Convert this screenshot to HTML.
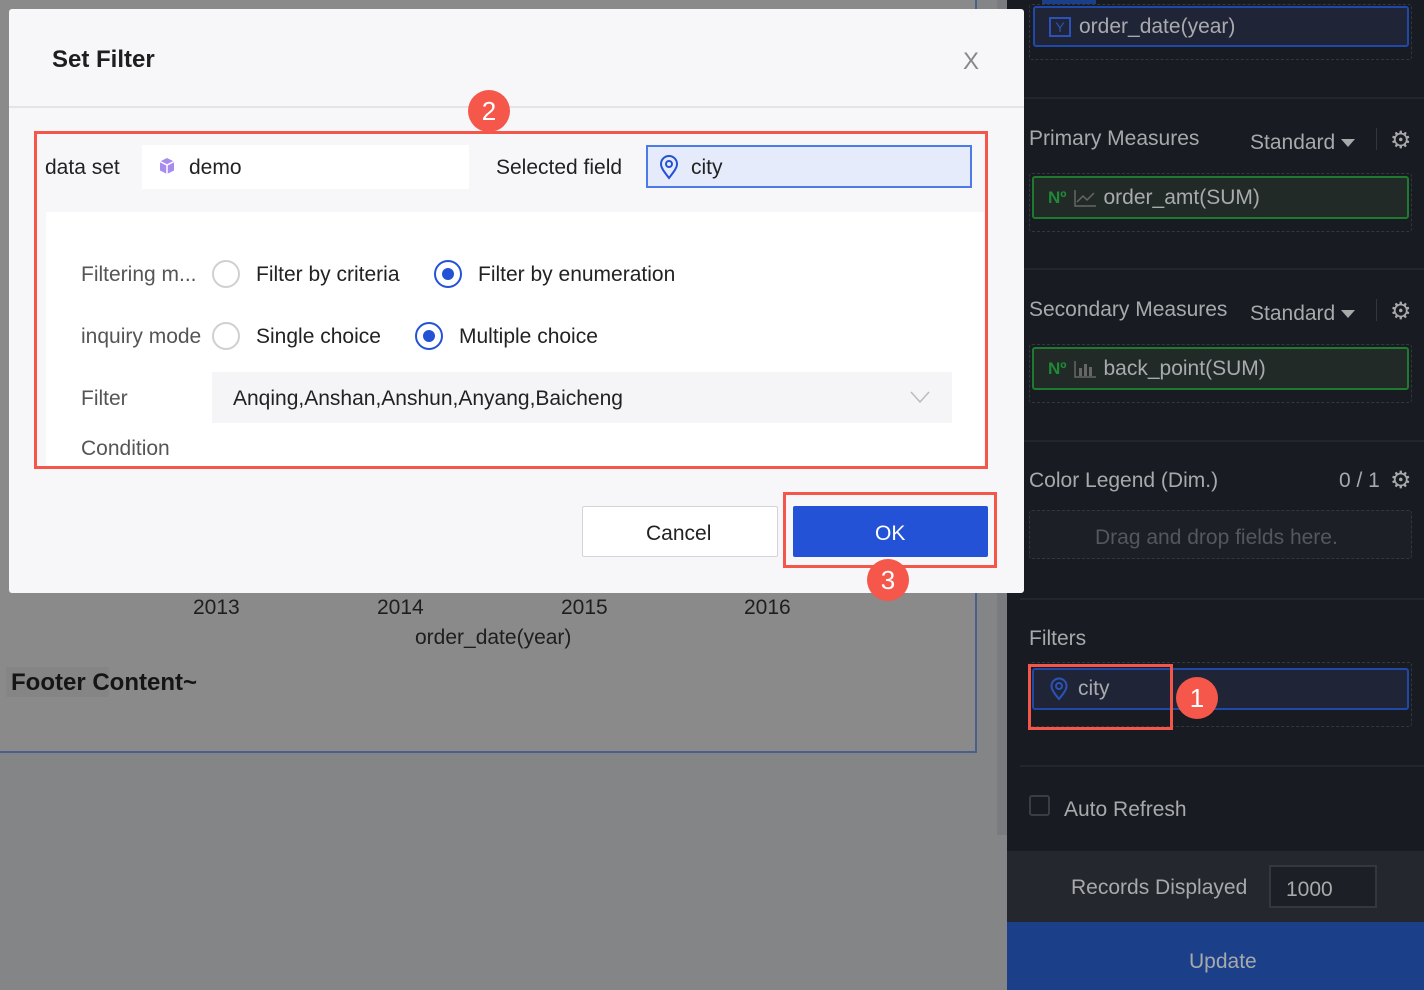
<!DOCTYPE html>
<html><head><meta charset="utf-8"><style>
*{box-sizing:border-box;margin:0;padding:0}
body{width:1424px;height:990px;overflow:hidden;position:relative;background:#848586;font-family:"Liberation Sans",sans-serif}
.abs{position:absolute}
.side{left:1007px;top:0;width:417px;height:990px;background:#181b22}
.t{color:#a8a9ab;font-size:21px;position:absolute}
.hr{position:absolute;left:1020px;width:404px;height:2px;background:#23262d}
.dash{position:absolute;border:1.5px dashed #33363d;border-radius:3px}
.pill{position:absolute;border-radius:3px;font-size:21px;color:#a9aaad;padding-left:14px;display:flex;align-items:center}
.badge{position:absolute;width:42px;height:42px;border-radius:50%;background:#f5574b;color:#fff;font-size:26px;display:flex;align-items:center;justify-content:center}
.red{position:absolute;border:3px solid #f5564a}
.lbl{position:absolute;font-size:21px;color:#555}
.txt{position:absolute;font-size:21px;color:#222}
.radio{position:absolute;width:28px;height:28px;border-radius:50%;border:2px solid #d0d0d3;background:#fff}
.radio.on{border:2px solid #2452d6}
.radio.on::after{content:"";position:absolute;left:6px;top:6px;width:12px;height:12px;border-radius:50%;background:#2452d6}
.tri{display:inline-block;width:0;height:0;border-left:7px solid transparent;border-right:7px solid transparent;border-top:8px solid #a8a9ab;vertical-align:middle;margin-left:6px}
</style></head><body>
<div class="abs" style="left:0;top:0;width:977px;height:753px;background:#8a8a8a;border-right:2px solid #4a5f8f;border-bottom:2px solid #4a5f8f"></div>
<div class="abs" style="left:997px;top:0;width:10px;height:835px;background:#7a7b7e"></div>
<div class="txt" style="left:193px;top:596px;color:#1e1e1e">2013</div>
<div class="txt" style="left:377px;top:596px;color:#1e1e1e">2014</div>
<div class="txt" style="left:561px;top:596px;color:#1e1e1e">2015</div>
<div class="txt" style="left:744px;top:596px;color:#1e1e1e">2016</div>
<div class="txt" style="left:415px;top:626px;color:#1e1e1e">order_date(year)</div>
<div class="abs" style="left:6px;top:667px;width:103px;height:30px;background:#858585"></div>
<div class="txt" style="left:11px;top:669px;font-weight:bold;font-size:24px;color:#151515">Footer Content~</div>

<div class="abs side"></div>
<div class="abs" style="left:1042px;top:0;width:54px;height:4px;background:#1c3f8a"></div>
<div class="dash" style="left:1029px;top:4px;width:383px;height:56px"></div>
<div class="pill" style="left:1033px;top:6px;width:376px;height:41px;background:#1f2537;border:2px solid #1f49a8"><span style="display:inline-block;width:22px;height:20px;border:2px solid #2a52b8;color:#2a52b8;font-size:14px;text-align:center;line-height:16px;margin-right:8px">Y</span>order_date(year)</div>
<div class="hr" style="top:97px"></div>
<div class="t" style="left:1029px;top:127px">Primary Measures</div>
<div class="t" style="left:1250px;top:131px">Standard<span class="tri"></span></div>
<div class="abs" style="left:1376px;top:128px;width:1px;height:22px;background:#33363d"></div>
<div class="t" style="left:1390px;top:126px;font-size:24px">⚙</div>
<div class="dash" style="left:1029px;top:173px;width:383px;height:59px"></div>
<div class="pill" style="left:1032px;top:176px;width:377px;height:43px;background:#222a28;border:2px solid #1e7a2e"><span style="color:#1f8a35;font-size:17px;font-weight:bold;margin-right:6px">Nº</span><svg width="24" height="18" viewBox="0 0 24 18" style="margin-right:7px"><path d="M2 1v16h21M4 13l6-6 4 4 7-7" fill="none" stroke="#666" stroke-width="1.5"/></svg>order_amt(SUM)</div>
<div class="hr" style="top:268px"></div>
<div class="t" style="left:1029px;top:298px">Secondary Measures</div>
<div class="t" style="left:1250px;top:302px">Standard<span class="tri"></span></div>
<div class="abs" style="left:1376px;top:299px;width:1px;height:22px;background:#33363d"></div>
<div class="t" style="left:1390px;top:297px;font-size:24px">⚙</div>
<div class="dash" style="left:1029px;top:344px;width:383px;height:59px"></div>
<div class="pill" style="left:1032px;top:347px;width:377px;height:43px;background:#222a28;border:2px solid #1e7a2e"><span style="color:#1f8a35;font-size:17px;font-weight:bold;margin-right:6px">Nº</span><svg width="24" height="18" viewBox="0 0 24 18" style="margin-right:7px"><path d="M2 1v16h21" fill="none" stroke="#666" stroke-width="1.5"/><rect x="6" y="8" width="3" height="8" fill="#666"/><rect x="11" y="4" width="3" height="12" fill="#666"/><rect x="16" y="7" width="3" height="9" fill="#666"/></svg>back_point(SUM)</div>
<div class="hr" style="top:440px"></div>
<div class="t" style="left:1029px;top:469px">Color Legend (Dim.)</div>
<div class="t" style="left:1339px;top:469px">0 / 1</div>
<div class="t" style="left:1390px;top:466px;font-size:24px">⚙</div>
<div class="dash" style="left:1029px;top:510px;width:383px;height:49px;background:#1c1f26"></div>
<div class="t" style="left:1095px;top:526px;color:#55575c">Drag and drop fields here.</div>
<div class="hr" style="top:598px"></div>
<div class="t" style="left:1029px;top:627px">Filters</div>
<div class="dash" style="left:1029px;top:662px;width:383px;height:65px"></div>
<div class="pill" style="left:1032px;top:668px;width:377px;height:42px;background:#1f2537;border:2px solid #1f49a8"><svg width="22" height="24" viewBox="0 0 22 24" style="margin-right:8px"><path d="M11 22C6 16 3.5 12.5 3.5 9a7.5 7.5 0 0115 0c0 3.5-2.5 7-7.5 13z" fill="none" stroke="#2a52b8" stroke-width="2"/><circle cx="11" cy="9" r="3" fill="none" stroke="#2a52b8" stroke-width="2"/></svg>city</div>
<div class="red" style="left:1028px;top:664px;width:145px;height:66px"></div>
<div class="badge" style="left:1176px;top:677px">1</div>
<div class="hr" style="top:765px"></div>
<div class="abs" style="left:1029px;top:795px;width:21px;height:21px;border:2px solid #3a3d44;border-radius:3px"></div>
<div class="t" style="left:1064px;top:798px">Auto Refresh</div>
<div class="abs" style="left:1007px;top:851px;width:417px;height:71px;background:#24272d"></div>
<div class="t" style="left:1071px;top:876px">Records Displayed</div>
<div class="abs" style="left:1269px;top:865px;width:108px;height:43px;border:2px solid #34373e;background:#1c1f25"></div>
<div class="t" style="left:1286px;top:878px">1000</div>
<div class="abs" style="left:1007px;top:922px;width:417px;height:68px;background:#1c3f8a"></div>
<div class="t" style="left:1189px;top:950px">Update</div>

<div class="abs" style="left:9px;top:9px;width:1015px;height:584px;background:#f7f7f9;border-radius:3px"></div>
<div class="txt" style="left:52px;top:46px;font-size:24px;font-weight:bold;color:#1e1e1e">Set Filter</div>
<div class="txt" style="left:963px;top:48px;font-size:24px;color:#888">X</div>
<div class="abs" style="left:9px;top:106px;width:1015px;height:2px;background:#e4e4e6"></div>
<div class="abs" style="left:142px;top:145px;width:327px;height:44px;background:#fff"></div>
<div class="txt" style="left:45px;top:156px">data set</div>
<svg class="abs" style="left:157px;top:156px" width="20" height="20" viewBox="0 0 20 20"><path d="M10 2l7 3.5v9L10 18l-7-3.5v-9z" fill="#a78bf0"/><path d="M10 9v9M3 5.5L10 9l7-3.5" stroke="#fff" stroke-width="1.5" fill="none"/></svg>
<div class="txt" style="left:189px;top:156px">demo</div>
<div class="txt" style="left:496px;top:156px">Selected field</div>
<div class="abs" style="left:646px;top:145px;width:326px;height:43px;background:#e6ebfb;border:2px solid #4c7ae8"></div>
<svg class="abs" style="left:658px;top:154px" width="22" height="26" viewBox="0 0 22 26"><path d="M11 24C5.5 17 3 13.5 3 10a8 8 0 0116 0c0 3.5-2.5 7-8 14z" fill="none" stroke="#2452d6" stroke-width="2"/><circle cx="11" cy="10" r="3" fill="none" stroke="#2452d6" stroke-width="2"/></svg>
<div class="txt" style="left:691px;top:156px">city</div>
<div class="abs" style="left:46px;top:212px;width:938px;height:254px;background:#fff"></div>
<div class="lbl" style="left:81px;top:263px">Filtering m...</div>
<div class="radio" style="left:212px;top:260px"></div>
<div class="txt" style="left:256px;top:263px">Filter by criteria</div>
<div class="radio on" style="left:434px;top:260px"></div>
<div class="txt" style="left:478px;top:263px">Filter by enumeration</div>
<div class="lbl" style="left:81px;top:325px">inquiry mode</div>
<div class="radio" style="left:212px;top:322px"></div>
<div class="txt" style="left:256px;top:325px">Single choice</div>
<div class="radio on" style="left:415px;top:322px"></div>
<div class="txt" style="left:459px;top:325px">Multiple choice</div>
<div class="lbl" style="left:81px;top:387px">Filter</div>
<div class="abs" style="left:212px;top:372px;width:740px;height:51px;background:#f5f5f7"></div>
<div class="txt" style="left:233px;top:387px">Anqing,Anshan,Anshun,Anyang,Baicheng</div>
<svg class="abs" style="left:910px;top:391px" width="20" height="12" viewBox="0 0 20 12"><path d="M1 1l9 10 9-10" fill="none" stroke="#bbb" stroke-width="1.5"/></svg>
<div class="lbl" style="left:81px;top:437px">Condition</div>
<div class="red" style="left:34px;top:131px;width:954px;height:338px"></div>
<div class="badge" style="left:468px;top:90px">2</div>
<div class="abs" style="left:582px;top:506px;width:196px;height:51px;background:#fff;border:1.5px solid #d4d4d8;border-radius:2px"></div>
<div class="txt" style="left:646px;top:522px">Cancel</div>
<div class="abs" style="left:793px;top:506px;width:195px;height:51px;background:#2452d6;border-radius:2px"></div>
<div class="txt" style="left:875px;top:522px;color:#fff">OK</div>
<div class="red" style="left:783px;top:492px;width:214px;height:76px"></div>
<div class="badge" style="left:867px;top:559px">3</div>
</body></html>
